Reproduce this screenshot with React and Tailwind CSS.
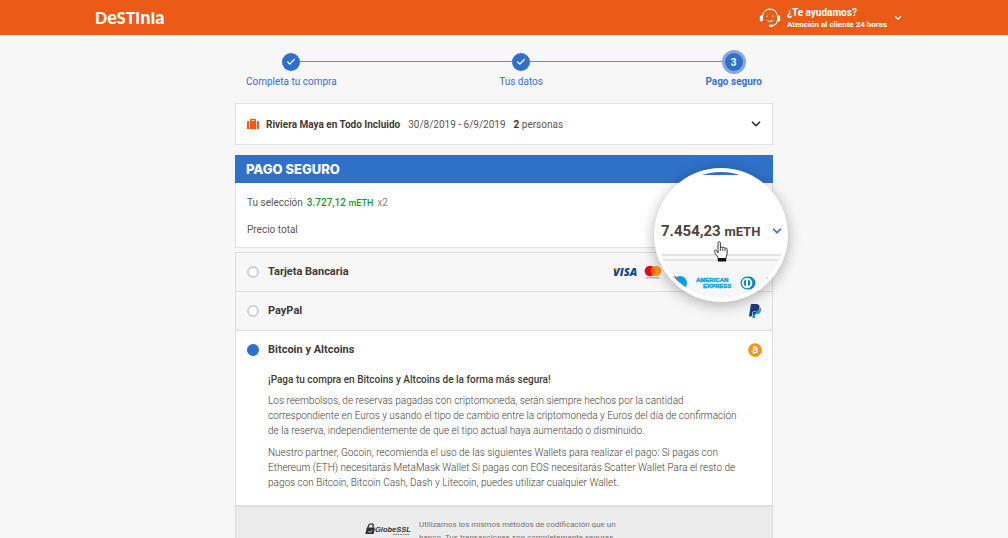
import { useState } from 'react';
import { ChevronDown, Check } from 'lucide-react';
import { FaBitcoin, FaPaypal, FaSuitcase } from 'react-icons/fa';

const steps = [
  { id: 1, label: 'Completa tu compra', done: true },
  { id: 2, label: 'Tus datos', done: true },
  { id: 3, label: 'Pago seguro', done: false },
];

function HeadsetIcon() {
  return (
    <svg viewBox="0 0 22 20" className="w-[22px] h-5" fill="none" stroke="white" strokeLinecap="round">
      <path d="M3.5 8.5C3.8 4 7 1.2 11 1.2s7.2 2.8 7.5 7.3" strokeWidth="1.2" />
      <path d="M18.3 12.5c-.5 3.2-2.6 5-5.3 5.3" strokeWidth="1.2" />
      <rect x="0.8" y="7.5" width="3.2" height="6" rx="1.4" fill="white" stroke="none" />
      <rect x="18" y="7.5" width="3.2" height="6" rx="1.4" fill="white" stroke="none" />
      <ellipse cx="11.8" cy="17.8" rx="2" ry="1.3" fill="white" stroke="none" />
      <path d="M8 8.2h.6M13.4 8.2h.6" strokeWidth="1" />
      <path d="M8 12.2c1.5 1.7 4.5 1.7 6 0" strokeWidth="1" />
    </svg>
  );
}

function VisaLogo() {
  return (
    <svg viewBox="0 0 26 14" className="w-[26px] h-3.5 overflow-visible" role="img" aria-label="Visa">
      <text x="1" y="11" fontFamily="Open Sans, sans-serif" fontSize="11" fontWeight="800" fontStyle="italic" fill="#0e4595">VISA</text>
      <path d="M0 3h4.2l1 3.4C4 4.6 2.4 3.6 0 3z" fill="#f2ae14" />
    </svg>
  );
}

function MastercardLogo() {
  return (
    <svg viewBox="0 0 18 14" className="w-[18px] h-3.5" role="img" aria-label="Mastercard">
      <circle cx="6" cy="6" r="5.3" fill="#eb001b" />
      <circle cx="12" cy="6" r="5.3" fill="#f79e1b" />
      <path d="M9 1.6a5.3 5.3 0 0 1 0 8.8a5.3 5.3 0 0 1 0-8.8z" fill="#ff5f00" />
      <path d="M2.5 12.8h13" stroke="#555" strokeWidth="0.8" strokeDasharray="1.5 .4" />
    </svg>
  );
}

function MaestroLogo() {
  return (
    <svg viewBox="0 0 26 16" className="w-[26px] h-4" role="img" aria-label="Maestro">
      <circle cx="11" cy="7" r="7" fill="#e5173f" />
      <circle cx="18" cy="7" r="7" fill="#00a2e5" />
      <path d="M14.5 .9a7 7 0 0 1 0 12.2a7 7 0 0 1 0-12.2z" fill="#7375cf" />
    </svg>
  );
}

function AmexLogo() {
  return (
    <svg viewBox="0 0 36 14" className="w-9 h-3.5" role="img" aria-label="American Express">
      <g fontFamily="Liberation Sans, sans-serif" fontSize="6" fontWeight="700" fill="#10a3dc" stroke="#10a3dc" strokeWidth="0.4">
        <text x="0" y="6">AMERICAN</text>
        <text x="7" y="12">EXPRESS</text>
      </g>
    </svg>
  );
}

function DinersLogo() {
  return (
    <svg viewBox="0 0 16 14" className="w-4 h-3.5" role="img" aria-label="Diners Club">
      <path d="M7 .5h2a6.5 6.5 0 0 1 0 13H7a6.5 6.5 0 0 1 0-13z" fill="#0d87c6" />
      <circle cx="7" cy="7" r="5.3" fill="white" />
      <path d="M6 3.5a3.7 3.7 0 0 0 0 7zM8 3.5a3.7 3.7 0 0 1 0 7z" fill="#0d87c6" />
    </svg>
  );
}

function PaypalLogo() {
  return (
    <svg viewBox="0 0 14 16" className="w-3.5 h-4" role="img" aria-label="PayPal">
      <defs>
        <linearGradient id="paypal" gradientUnits="userSpaceOnUse" x1="0" y1="0" x2="384" y2="512">
          <stop offset="0.6" stopColor="#24357c" />
          <stop offset="0.6" stopColor="#109fdc" />
        </linearGradient>
      </defs>
      <FaPaypal x="-1" y="0" size="16" fill="url(#paypal)" />
    </svg>
  );
}

function GlobeSslLogo() {
  return (
    <svg viewBox="0 0 46 14" className="w-[46px] h-3.5 shrink-0" role="img" aria-label="GlobeSSL">
      <path d="M2.8 6 3.8 3c.5-1.5 4.8-1.8 4.5.3L7.7 5.5" fill="none" stroke="#333" strokeWidth="1.3" />
      <path d="M1.8 5.5H10L8.7 12H.3z" fill="#333" />
      <path d="M3.5 9.5c1 .9 2.8.4 3.5-1" fill="none" stroke="#ececec" strokeWidth="1" />
      <text x="10" y="9.5" fontFamily="Liberation Sans, sans-serif" fontSize="7.5" fontWeight="700" fontStyle="italic" fill="#333">GlobeSSL</text>
      <path d="M28 12.5h16" stroke="#777" strokeWidth="1.2" strokeDasharray="1.6 .8" />
    </svg>
  );
}

function HandCursor() {
  return (
    <svg viewBox="0 0 14 21" className="w-3.5 h-[21px]" strokeLinejoin="round">
      <path
        d="M4 12V2.2c0-2 2.4-2 2.4 0V7c.2-1.500 2.300-1.300 2.300.2.300-1.300 2.300-1.100 2.300.4.400-1 2.200-.7 2.200.7v4.200c0 2-1.400 3-1.400 5H4.200c0-2-3.400-4.200-3.700-7.400C.4 8.600 2.500 8.800 3 10.200z"
        fill="white"
        stroke="#222"
        strokeWidth="0.9"
      />
      <path d="M6.4 7v3M8.7 7.5V10M11 8v2.3" stroke="#222" strokeWidth="0.8" />
      <path d="M3.8 17h8.4v3.5H3.8z" fill="#111" />
    </svg>
  );
}

function Header() {
  return (
    <header className="bg-[#eb5b17] text-white">
      <div className="max-w-[818px] mx-auto h-[35px] flex items-center justify-between pr-2.5">
        <a href="#" aria-label="Destinia" className="flex items-baseline font-['Lato'] font-black text-[16px] leading-4">
          D<span className="text-[18px]">e</span>STI<span className="text-[18px]">n</span>I<span className="text-[18px]">a</span>
        </a>
        <button type="button" className="flex items-center gap-1.5 text-left">
          <HeadsetIcon />
          <span className="pt-0.5">
            <span className="block text-[10px] leading-3 font-bold">¿Te ayudamos?</span>
            <span className="block text-[8px] leading-3 font-bold">Atención al cliente 24 horas</span>
          </span>
          <ChevronDown className="size-2.5" strokeWidth={3} />
        </button>
      </div>
    </header>
  );
}

function Stepper() {
  return (
    <ol className="relative flex justify-between px-[11px] pt-[15px] text-[10px] text-[#3373d6]">
      <li aria-hidden="true" className="absolute left-14 right-10 top-[26px] h-px bg-[#5a8cdb]" />
      {steps.map(step => (
        <li key={step.id} className="relative flex flex-col items-center">
          <span className="size-6 flex items-center justify-center">
            {step.done ? (
              <span className="size-[18px] rounded-full bg-[#2f70c9] text-white flex items-center justify-center">
                <Check className="size-2.5" strokeWidth={3} />
              </span>
            ) : (
              <span className="size-[18px] rounded-full bg-[#2f70c9] text-white font-bold ring-3 ring-[#86a7e0] flex items-center justify-center">
                {step.id}
              </span>
            )}
          </span>
          <span className={step.done ? 'leading-4' : 'leading-4 font-bold'}>{step.label}</span>
        </li>
      ))}
    </ol>
  );
}

function Magnifier() {
  return (
    <div className="absolute -right-[15px] top-[13px] z-10 size-[134px] rounded-full bg-white p-1 shadow-[0_3px_14px_rgba(0,0,0,0.3)]">
      <div className="size-full rounded-full overflow-hidden bg-white flex flex-col">
        <div className="h-[3px] shrink-0 bg-[#2f70c9]" />
        <div className="h-[79px] shrink-0 flex items-end justify-between pl-[3px] pb-3">
          <span className="text-[15px] leading-5 font-bold text-[#4a4542] whitespace-nowrap">
            7.454,23 <span className="text-[13px]">mETH</span>
          </span>
          <button type="button" aria-label="Cambiar moneda" className="pb-1">
            <ChevronDown className="size-3.5 text-[#2f70c9]" strokeWidth={3} />
          </button>
        </div>
        <div className="h-[7px] shrink-0 border-y-2 border-[#e4e4e4] bg-[#f7f7f7]" />
        <div className="grow bg-[#f7f7f7] flex justify-center items-start gap-2 pr-0.5 pt-[15px]">
          <MaestroLogo />
          <AmexLogo />
          <DinersLogo />
          <PaypalLogo />
        </div>
      </div>
      <div className="absolute left-[60px] top-[73px]">
        <HandCursor />
      </div>
    </div>
  );
}

function PaymentOption({ id, label, selected, onSelect, logos, children }) {
  return (
    <div className={selected ? 'border-b border-[#dedede] bg-white' : 'border-b border-[#dedede] bg-[#f7f7f7]'}>
      <label htmlFor={id} className="h-[38px] flex items-center gap-[9px] pl-[11px] pr-2.5 text-[11px] font-bold text-[#3f3a37] cursor-pointer">
        <input
          type="radio"
          id={id}
          name="payment"
          checked={selected}
          onChange={() => onSelect(id)}
          className="appearance-none size-3 rounded-full border-2 border-[#d0d0d0] bg-white checked:border-[#2f70c9] checked:bg-[#2f70c9]"
        />
        <span className="grow">{label}</span>
        {logos}
      </label>
      {selected && children}
    </div>
  );
}

export default function App() {
  const [payment, setPayment] = useState('bitcoin');

  return (
    <div className="min-h-screen bg-[#f7f7f7] font-['Roboto',sans-serif] text-[#5c5754]">
      <Header />
      <main className="max-w-[538px] mx-auto">
        <Stepper />

        <button type="button" className="mt-[13px] w-full h-[42px] flex items-center border border-[#e3e3e3] bg-white px-[11px] text-[10px] text-left">
          <FaSuitcase className="size-3 text-[#eb5b17]" />
          <span className="ml-[7px] font-bold text-[#3f3a37]">Riviera Maya en Todo Incluido</span>
          <span className="ml-2">30/8/2019 - 6/9/2019</span>
          <span className="ml-2 grow"><b className="font-bold text-[#3f3a37]">2</b> personas</span>
          <ChevronDown className="size-3.5 -mr-0.5 text-[#333]" strokeWidth={3} />
        </button>

        <section className="relative mt-2.5">
          <h1 className="h-7 flex items-center bg-[#2f70c9] px-[11px] pt-0.5 font-['Inter'] font-extrabold text-[13px] text-white">PAGO SEGURO</h1>
          <div className="border border-t-0 border-[#e3e3e3] bg-white px-[11px] pt-3 pb-2.5 text-[10px]">
            <p className="leading-[15px]">
              Tu selección
              <span className="mx-1 font-medium text-[#159a1c]">3.727,12 <span className="text-[9px] leading-none">mETH</span></span>
              <span className="text-[#888]">x2</span>
            </p>
            <p className="mt-3 leading-[15px]">Precio total</p>
          </div>
          <Magnifier />
        </section>

        <section className="mt-1 border border-b-0 border-[#dedede]">
          <PaymentOption
            id="card"
            label="Tarjeta Bancaria"
            selected={payment === 'card'}
            onSelect={setPayment}
            logos={
              <span className="flex items-center gap-1.5 pr-[100px]">
                <VisaLogo />
                <MastercardLogo />
              </span>
            }
          />
          <PaymentOption
            id="paypal"
            label="PayPal"
            selected={payment === 'paypal'}
            onSelect={setPayment}
            logos={<PaypalLogo />}
          />
          <PaymentOption
            id="bitcoin"
            label="Bitcoin y Altcoins"
            selected={payment === 'bitcoin'}
            onSelect={setPayment}
            logos={<FaBitcoin className="size-3.5 text-[#f7931a]" />}
          >
            <div className="pl-8 pr-6 pt-[3px] pb-[15px] text-[10px] leading-[15px] font-light text-[#45403d]">
              <h2 className="font-medium text-[#3f3a37]">¡Paga tu compra en Bitcoins y Altcoins de la forma más segura!</h2>
              <p className="mt-1.5">
                Los reembolsos, de reservas pagadas con criptomoneda, serán siempre hechos por la cantidad
                correspondiente en Euros y usando el tipo de cambio entre la criptomoneda y Euros del día de confirmación
                de la reserva, independientemente de que el tipo actual haya aumentado o disminuido.
              </p>
              <p className="mt-[7px]">
                Nuestro partner, Gocoin, recomienda el uso de las siguientes Wallets para realizar el pago: Si pagas con
                Ethereum (ETH) necesitarás MetaMask Wallet Si pagas con EOS necesitarás Scatter Wallet Para el resto de
                pagos con Bitcoin, Bitcoin Cash, Dash y Litecoin, puedes utilizar cualquier Wallet.
              </p>
            </div>
          </PaymentOption>
          <footer className="flex justify-center items-start gap-2 border-t border-[#dedede] bg-[#ececec] pr-3 pt-[11px] pb-3 text-[8px] leading-[13px] text-[#77726f]">
            <span className="pt-1"><GlobeSslLogo /></span>
            <p className="w-[212px]">
              Utilizamos los mismos métodos de codificación que un banco. Tus transacciones son completamente seguras.
            </p>
          </footer>
        </section>
      </main>
    </div>
  );
}
